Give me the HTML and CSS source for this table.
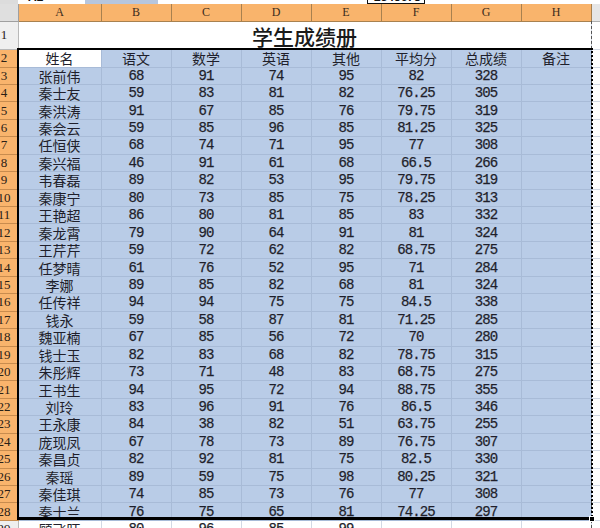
FILE: index.html
```html
<!DOCTYPE html>
<html lang="zh-CN">
<head>
<meta charset="utf-8">
<title>学生成绩册</title>
<link rel="stylesheet" href="styles.css">
</head>
<body>
<div class="topbar">
  <div class="tb-corner"></div>
  <div class="tb-name"><span class="tb-txt">A2</span></div>
  <div class="tb-blue"></div>
  <div class="tb-space"></div>
  <div class="tb-box"><span class="tb-txt">2345678</span></div>
  <div class="tb-rest"></div>
</div>
<div class="sheet">
<table class="grid">
<colgroup><col class="c-rh"><col class="c-a"><col class="c-n"><col class="c-n"><col class="c-n"><col class="c-n"><col class="c-n"><col class="c-n"><col class="c-n"><col class="c-x"></colgroup>
<thead>
<tr class="colhead"><th class="corner"></th><th>A</th><th>B</th><th>C</th><th>D</th><th>E</th><th>F</th><th>G</th><th>H</th><th class="xh"></th></tr>
</thead>
<tbody>
<tr class="r1"><th class="rh plain"><span>1</span></th><td colspan="8" class="title">学生成绩册</td><td class="x"></td></tr>
<tr class="sel hdr"><th class="rh"><span>2</span></th><td class="active">姓名</td><td>语文</td><td>数学</td><td>英语</td><td>其他</td><td>平均分</td><td>总成绩</td><td>备注</td><td class="x"></td></tr>
<tr class="sel d"><th class="rh"><span>3</span></th><td>张前伟</td><td>68</td><td>91</td><td>74</td><td>95</td><td>82</td><td>328</td><td></td><td class="x"></td></tr>
<tr class="sel d"><th class="rh"><span>4</span></th><td>秦士友</td><td>59</td><td>83</td><td>81</td><td>82</td><td>76.25</td><td>305</td><td></td><td class="x"></td></tr>
<tr class="sel d"><th class="rh"><span>5</span></th><td>秦洪涛</td><td>91</td><td>67</td><td>85</td><td>76</td><td>79.75</td><td>319</td><td></td><td class="x"></td></tr>
<tr class="sel d"><th class="rh"><span>6</span></th><td>秦会云</td><td>59</td><td>85</td><td>96</td><td>85</td><td>81.25</td><td>325</td><td></td><td class="x"></td></tr>
<tr class="sel d"><th class="rh"><span>7</span></th><td>任恒侠</td><td>68</td><td>74</td><td>71</td><td>95</td><td>77</td><td>308</td><td></td><td class="x"></td></tr>
<tr class="sel d"><th class="rh"><span>8</span></th><td>秦兴福</td><td>46</td><td>91</td><td>61</td><td>68</td><td>66.5</td><td>266</td><td></td><td class="x"></td></tr>
<tr class="sel d"><th class="rh"><span>9</span></th><td>韦春磊</td><td>89</td><td>82</td><td>53</td><td>95</td><td>79.75</td><td>319</td><td></td><td class="x"></td></tr>
<tr class="sel d"><th class="rh"><span>10</span></th><td>秦康宁</td><td>80</td><td>73</td><td>85</td><td>75</td><td>78.25</td><td>313</td><td></td><td class="x"></td></tr>
<tr class="sel d"><th class="rh"><span>11</span></th><td>王艳超</td><td>86</td><td>80</td><td>81</td><td>85</td><td>83</td><td>332</td><td></td><td class="x"></td></tr>
<tr class="sel d"><th class="rh"><span>12</span></th><td>秦龙霄</td><td>79</td><td>90</td><td>64</td><td>91</td><td>81</td><td>324</td><td></td><td class="x"></td></tr>
<tr class="sel d"><th class="rh"><span>13</span></th><td>王芹芹</td><td>59</td><td>72</td><td>62</td><td>82</td><td>68.75</td><td>275</td><td></td><td class="x"></td></tr>
<tr class="sel d"><th class="rh"><span>14</span></th><td>任梦晴</td><td>61</td><td>76</td><td>52</td><td>95</td><td>71</td><td>284</td><td></td><td class="x"></td></tr>
<tr class="sel d"><th class="rh"><span>15</span></th><td>李娜</td><td>89</td><td>85</td><td>82</td><td>68</td><td>81</td><td>324</td><td></td><td class="x"></td></tr>
<tr class="sel d"><th class="rh"><span>16</span></th><td>任传祥</td><td>94</td><td>94</td><td>75</td><td>75</td><td>84.5</td><td>338</td><td></td><td class="x"></td></tr>
<tr class="sel d"><th class="rh"><span>17</span></th><td>钱永</td><td>59</td><td>58</td><td>87</td><td>81</td><td>71.25</td><td>285</td><td></td><td class="x"></td></tr>
<tr class="sel d"><th class="rh"><span>18</span></th><td>魏亚楠</td><td>67</td><td>85</td><td>56</td><td>72</td><td>70</td><td>280</td><td></td><td class="x"></td></tr>
<tr class="sel d"><th class="rh"><span>19</span></th><td>钱士玉</td><td>82</td><td>83</td><td>68</td><td>82</td><td>78.75</td><td>315</td><td></td><td class="x"></td></tr>
<tr class="sel d"><th class="rh"><span>20</span></th><td>朱彤辉</td><td>73</td><td>71</td><td>48</td><td>83</td><td>68.75</td><td>275</td><td></td><td class="x"></td></tr>
<tr class="sel d"><th class="rh"><span>21</span></th><td>王书生</td><td>94</td><td>95</td><td>72</td><td>94</td><td>88.75</td><td>355</td><td></td><td class="x"></td></tr>
<tr class="sel d"><th class="rh"><span>22</span></th><td>刘玲</td><td>83</td><td>96</td><td>91</td><td>76</td><td>86.5</td><td>346</td><td></td><td class="x"></td></tr>
<tr class="sel d"><th class="rh"><span>23</span></th><td>王永康</td><td>84</td><td>38</td><td>82</td><td>51</td><td>63.75</td><td>255</td><td></td><td class="x"></td></tr>
<tr class="sel d"><th class="rh"><span>24</span></th><td>庞现凤</td><td>67</td><td>78</td><td>73</td><td>89</td><td>76.75</td><td>307</td><td></td><td class="x"></td></tr>
<tr class="sel d"><th class="rh"><span>25</span></th><td>秦昌贞</td><td>82</td><td>92</td><td>81</td><td>75</td><td>82.5</td><td>330</td><td></td><td class="x"></td></tr>
<tr class="sel d"><th class="rh"><span>26</span></th><td>秦瑶</td><td>89</td><td>59</td><td>75</td><td>98</td><td>80.25</td><td>321</td><td></td><td class="x"></td></tr>
<tr class="sel d"><th class="rh"><span>27</span></th><td>秦佳琪</td><td>74</td><td>85</td><td>73</td><td>76</td><td>77</td><td>308</td><td></td><td class="x"></td></tr>
<tr class="sel d"><th class="rh"><span>28</span></th><td>秦士兰</td><td>76</td><td>75</td><td>65</td><td>81</td><td>74.25</td><td>297</td><td></td><td class="x"></td></tr>
<tr class="plainrow d"><th class="rh plain"><span>29</span></th><td>顾飞旺</td><td>80</td><td>96</td><td>85</td><td>99</td><td></td><td></td><td></td><td class="x"></td></tr>
</tbody>
</table>
<div class="pagebreak"></div>
<div class="selection"><div class="handle"></div></div>
</div>
</body>
</html>
```

FILE: styles.css
```css
* { box-sizing: border-box; }
html, body { margin: 0; padding: 0; background: #ffffff; }
body {
  width: 600px;
  height: 528px;
  overflow: hidden;
  font-family: "Noto Sans CJK SC", sans-serif;
  color: #1f1f2b;
}

/* remnant of the formula bar */
.topbar { display: flex; height: 4px; overflow: hidden; background: #ffffff; }
.tb-corner { width: 18px; background: #dcdcdc; }
.tb-name { width: 67px; padding-left: 10px; }
.tb-blue { width: 73px; background: #b7c6dd; }
.tb-space { width: 209px; }
.tb-box { width: 58px; border: 1px solid #111; border-top: none; padding-left: 6px; }
.tb-rest { flex: 1; }
.tb-txt {
  display: block;
  font: bold 12px/12px "Liberation Sans", sans-serif;
  margin-top: -9px;
  color: #111;
}

/* sheet */
.sheet { position: relative; }
.grid {
  border-collapse: collapse;
  table-layout: fixed;
  width: 600px;
}
.c-rh { width: 18px; }
.c-a { width: 83px; }
.c-n { width: 70px; }
.c-x { width: 9px; }

.grid th, .grid td {
  padding: 0;
  overflow: hidden;
  white-space: nowrap;
  text-align: center;
  vertical-align: middle;
}

.colhead th {
  height: 17px;
  background: #f9b46c;
  border: 1px solid #a8814f;
  border-top: none;
  font: 12px/14px "Liberation Serif", serif;
  color: #3b2c1c;
}
.colhead .corner { background: #dfdfdf; border-color: #9f9f9f; border-left: none; }
.colhead .xh { background: #e6e6e6; border-color: #b0b0b0; border-right: none; }

.rh {
  background: #f9b46c;
  border: 1px solid #c88c4e;
  border-left: none;
  font: 13px/14px "Liberation Serif", serif;
  font-weight: normal;
  color: #2a2016;
  text-align: left;
}
.rh span { display: block; width: 26px; margin-left: -9px; text-align: center; }
.rh.plain { background: #efefef; border-color: #b8b8b8; }

.grid td {
  border: 1px solid #d2d9e4;
  font-size: 14px;
  line-height: 14px;
  background: #ffffff;
}

.r1 th, .r1 td { height: 28px; }
.r1 td.title {
  font-size: 21px;
  font-weight: 500;
  line-height: 22px;
  padding-top: 2px;
  color: #1a1a1a;
  border-right-color: #d2d9e4;
}

.hdr th, .hdr td { height: 18px; }
.d th, .d td { height: 17.45px; }

.sel td { background: #b9cce7; border-color: #a8bbd7; }
.sel td.active { background: #ffffff; }
.grid td.x { background: #ffffff; border-color: #d2d9e4; }

.d td {
  font-family: "Liberation Mono", monospace;
  font-size: 14px;
  letter-spacing: -0.9px;
  -webkit-text-stroke: 0.25px #1f1f2b;
}
.d td:first-of-type {
  font-family: "Noto Sans CJK SC", sans-serif;
  letter-spacing: 0;
  -webkit-text-stroke: 0;
}

/* page break line and selection frame (overlays) */
.pagebreak {
  position: absolute;
  left: 591px;
  top: 17px;
  bottom: 0;
  border-left: 1px dashed #555;
}
.selection {
  position: absolute;
  left: 17px;
  top: 44px;
  width: 576px;
  height: 472px;
  border: 2px solid #000;
  border-bottom-width: 3px;
  border-right: 2px dotted #000;
  pointer-events: none;
}
.handle {
  position: absolute;
  right: -4px;
  bottom: -5px;
  width: 6px;
  height: 6px;
  background: #000;
  border: 1px solid #fff;
}
```
